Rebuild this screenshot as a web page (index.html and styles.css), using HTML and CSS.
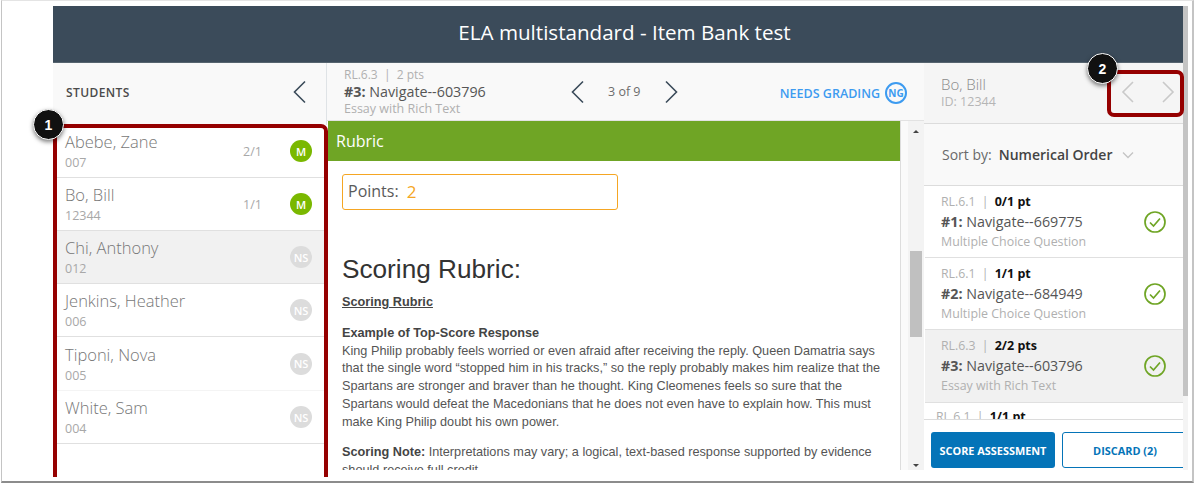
FILE: index.html
```html
<!DOCTYPE html>
<html lang="en">
<head>
    <meta charset="UTF-8">
    <meta name="viewport" content="width=device-width, initial-scale=1.0">
    <title>ELA multistandard - Item Bank test</title>
    <link rel="stylesheet" href="styles.css">
</head>
<body>
    <div class="window">
        <div class="app">
            <header class="title-bar">ELA multistandard - Item Bank test</header>
            <div class="columns">
                <aside class="students">
                    <div class="students-head">
                        <span class="students-title">STUDENTS</span>
                        <svg class="chevron" width="16" height="24" viewBox="0 0 16 24"><path d="M13 1.500 2.500 12 13 22.500"/></svg>
                    </div>
                    <div class="student">
                        <div class="student-text"><div class="student-name">Abebe, Zane</div><div class="student-id">007</div></div>
                        <span class="student-score">2/1</span>
                        <span class="badge badge-m">M</span>
                    </div>
                    <div class="student">
                        <div class="student-text"><div class="student-name">Bo, Bill</div><div class="student-id">12344</div></div>
                        <span class="student-score">1/1</span>
                        <span class="badge badge-m">M</span>
                    </div>
                    <div class="student selected">
                        <div class="student-text"><div class="student-name">Chi, Anthony</div><div class="student-id">012</div></div>
                        <span class="badge badge-ns">NS</span>
                    </div>
                    <div class="student">
                        <div class="student-text"><div class="student-name">Jenkins, Heather</div><div class="student-id">006</div></div>
                        <span class="badge badge-ns">NS</span>
                    </div>
                    <div class="student student-soft">
                        <div class="student-text"><div class="student-name">Tiponi, Nova</div><div class="student-id">005</div></div>
                        <span class="badge badge-ns">NS</span>
                    </div>
                    <div class="student">
                        <div class="student-text"><div class="student-name">White, Sam</div><div class="student-id">004</div></div>
                        <span class="badge badge-ns">NS</span>
                    </div>
                </aside>

                <main class="center">
                    <div class="item-head">
                        <div class="item-info">
                            <div class="item-meta">RL.6.3 &nbsp;|&nbsp; 2 pts</div>
                            <div class="item-name"><b>#3:</b> Navigate--603796</div>
                            <div class="item-type">Essay with Rich Text</div>
                        </div>
                        <div class="item-pager">
                            <svg class="chevron" width="16" height="24" viewBox="0 0 16 24"><path d="M13 1.500 2.500 12 13 22.500"/></svg>
                            <span class="pager-count">3 of 9</span>
                            <svg class="chevron" width="16" height="24" viewBox="0 0 16 24"><path d="M3 1.500 13.500 12 3 22.500"/></svg>
                        </div>
                        <div class="item-status">NEEDS GRADING <span class="badge-ng">NG</span></div>
                    </div>
                    <div class="center-body">
                        <div class="rubric">
                            <div class="rubric-bar">Rubric</div>
                            <div class="rubric-content">
                                <div class="points">Points: <span class="points-value">2</span></div>
                                <h2>Scoring Rubric:</h2>
                                <p class="rubric-sub">Scoring Rubric</p>
                                <p><b>Example of Top-Score Response</b><br>
                                King Philip probably feels worried or even afraid after receiving the reply. Queen Damatria says<br>
                                that the single word “stopped him in his tracks,” so the reply probably makes him realize that the<br>
                                Spartans are stronger and braver than he thought. King Cleomenes feels so sure that the<br>
                                Spartans would defeat the Macedonians that he does not even have to explain how. This must<br>
                                make King Philip doubt his own power.</p>
                                <p><b>Scoring Note:</b> Interpretations may vary; a logical, text-based response supported by evidence<br>
                                should receive full credit.</p>
                            </div>
                        </div>
                        <div class="scrollbar">
                            <span class="arrow-up"></span>
                            <span class="scroll-thumb"></span>
                            <span class="arrow-down"></span>
                        </div>
                    </div>
                </main>

                <aside class="questions">
                    <div class="questions-head">
                        <div>
                            <div class="current-name">Bo, Bill</div>
                            <div class="current-id">ID: 12344</div>
                        </div>
                        <div class="current-nav">
                            <svg class="chevron faded" width="14" height="22" viewBox="0 0 14 22"><path d="M12 1 2 11l10 10"/></svg>
                            <svg class="chevron faded" width="14" height="22" viewBox="0 0 14 22"><path d="M2 1l10 10L2 21"/></svg>
                        </div>
                    </div>
                    <div class="sort">
                        <span class="sort-label">Sort by:</span>
                        <span class="sort-value">Numerical Order</span>
                        <svg class="caret" width="12" height="8" viewBox="0 0 12 8"><path d="M1 1.500l5 5 5-5"/></svg>
                    </div>
                    <div class="question">
                        <div class="question-text">
                            <div class="question-meta">RL.6.1 <i>|</i> <b>0/1 pt</b></div>
                            <div class="question-name"><b>#1:</b> Navigate--669775</div>
                            <div class="question-type">Multiple Choice Question</div>
                        </div>
                        <svg class="check" width="22" height="22" viewBox="0 0 22 22"><circle cx="11" cy="11" r="10"/><path d="M6 11.500l3.500 3.500 6.500-7.500"/></svg>
                    </div>
                    <div class="question">
                        <div class="question-text">
                            <div class="question-meta">RL.6.1 <i>|</i> <b>1/1 pt</b></div>
                            <div class="question-name"><b>#2:</b> Navigate--684949</div>
                            <div class="question-type">Multiple Choice Question</div>
                        </div>
                        <svg class="check" width="22" height="22" viewBox="0 0 22 22"><circle cx="11" cy="11" r="10"/><path d="M6 11.500l3.500 3.500 6.500-7.500"/></svg>
                    </div>
                    <div class="question selected">
                        <div class="question-text">
                            <div class="question-meta">RL.6.3 <i>|</i> <b>2/2 pts</b></div>
                            <div class="question-name"><b>#3:</b> Navigate--603796</div>
                            <div class="question-type">Essay with Rich Text</div>
                        </div>
                        <svg class="check" width="22" height="22" viewBox="0 0 22 22"><circle cx="11" cy="11" r="10"/><path d="M6 11.500l3.500 3.500 6.500-7.500"/></svg>
                    </div>
                    <div class="question-peek">
                        <div class="question-meta">RL.6.1 <i>|</i> <b>1/1 pt</b></div>
                    </div>
                    <div class="actions">
                        <button class="btn-score" type="button">SCORE ASSESSMENT</button>
                        <button class="btn-discard" type="button">DISCARD (2)</button>
                    </div>
                </aside>
            </div>
        </div>

        <!-- barra de rolagem da janela -->
        <div class="page-scroll"><span class="page-thumb"></span></div>

        <!-- anotacoes por cima da tela -->
        <div class="callout-box callout-box-1"></div>
        <div class="callout-box callout-box-2"></div>
        <span class="callout callout-1">1</span>
        <span class="callout callout-2">2</span>
    </div>
</body>
</html>
```

FILE: styles.css
```css
* {
    box-sizing: border-box;
}

body {
    margin: 0;
    background-color: #fff;
    font-family: "Open Sans", sans-serif;
    overflow: hidden;
}

.window {
    position: relative;
    width: 1193px;
    height: 483px;
    margin-left: 1px;
    padding: 5px 9px 0 51px;
    border-top: 1px solid #e4e4e4;
    border-left: 1px solid #c4c4c4;
    border-right: 2px solid #c4c4c4;
    border-bottom: 2px solid #8c8c8c;
    background-color: #fff;
}

.app {
    height: 464px;
    overflow: hidden;
}

.title-bar {
    height: 57px;
    padding-left: 13px;
    background-color: #3b4b5a;
    border-bottom: 1px solid #56646f;
    color: #fff;
    font-size: 20.600px;
    line-height: 53px;
    text-align: center;
}

.columns {
    display: flex;
    height: 407px;
}

.chevron path {
    fill: none;
    stroke: #3b4b5a;
    stroke-width: 1.600;
}

.chevron.faded path {
    stroke: #c9c9c9;
}

/* coluna dos alunos */
.students {
    width: 274px;
    flex: none;
    background-color: #fff;
}

.students-head {
    display: flex;
    justify-content: space-between;
    align-items: center;
    height: 62px;
    padding: 0 18px 4px 13px;
    background-color: #f9f9f9;
    border-right: 1px solid #dfe3e6;
}

.students-title {
    color: #4b4b4b;
    font-size: 12px;
    font-weight: 600;
    letter-spacing: 0.4px;
}

.student {
    display: flex;
    align-items: center;
    height: 53px;
    padding: 0 15px 0 12px;
    border-bottom: 1px solid #e0e0e0;
}

.student.selected {
    background-color: #f1f1f1;
}

.student-soft {
    height: 54px;
    border-bottom-color: #f4f4f4;
}

.student-text {
    flex: 1;
}

.student-name {
    color: #777;
    font-size: 16.500px;
    font-weight: 300;
    line-height: 22px;
}

.student-id {
    margin-top: 1px;
    color: #a8a8a8;
    font-size: 12.500px;
    line-height: 17px;
}

.student-score {
    color: #a8a8a8;
    font-size: 12.500px;
    margin-right: 28px;
}

.badge {
    display: flex;
    justify-content: center;
    align-items: center;
    width: 22px;
    height: 22px;
    border-radius: 50%;
    color: #fff;
    font-size: 11px;
    font-weight: 600;
}

.badge-m {
    background-color: #7ab800;
}

.badge-ns {
    background-color: #dcdcdc;
}

/* coluna central */
.center {
    width: 597px;
    flex: none;
    min-width: 0;
}

.item-head {
    display: flex;
    align-items: center;
    height: 58px;
    padding: 0 17px 0 17px;
    background-color: #f9f9f9;
    border-bottom: 1px solid #e2e2e2;
}

.item-info {
    width: 226px;
    flex: none;
}

.item-meta {
    color: #b0b0b0;
    font-size: 12px;
    line-height: 16px;
}

.item-name {
    color: #555;
    font-size: 14.300px;
    line-height: 18px;
}

.item-type {
    color: #b0b0b0;
    font-size: 12.500px;
    line-height: 16px;
}

.item-pager {
    display: flex;
    align-items: center;
    gap: 22px;
    flex: none;
}

.pager-count {
    color: #6c6c6c;
    font-size: 12.500px;
}

.item-status {
    display: flex;
    align-items: center;
    gap: 5px;
    margin-left: auto;
    padding-top: 3px;
    color: #3d9bf0;
    font-size: 12.500px;
    font-weight: 600;
}

.badge-ng {
    display: flex;
    justify-content: center;
    align-items: center;
    width: 22px;
    height: 22px;
    border: 2px solid #3d9bf0;
    border-radius: 50%;
    font-size: 10px;
    font-weight: 700;
}

.center-body {
    display: flex;
    height: 349px;
}

.rubric {
    width: 573px;
    margin-left: 1px;
    flex: none;
    overflow: hidden;
    border-right: 1px solid #ddd;
    background-color: #fff;
}

.rubric-bar {
    height: 40px;
    padding-left: 8px;
    background-color: #6fa525;
    color: #fff;
    font-size: 16px;
    line-height: 40px;
}

.rubric-content {
    padding: 13px 0 0 14px;
    color: #555;
    font-family: "Liberation Sans", Arial, sans-serif;
    font-size: 12.700px;
    line-height: 17.750px;
}

.rubric-content b {
    color: #444;
}

.points {
    display: flex;
    align-items: center;
    gap: 8px;
    width: 276px;
    height: 36px;
    padding-left: 5px;
    border: 1px solid #f5a623;
    border-radius: 3px;
    color: #5a5a5a;
    font-family: "Open Sans", sans-serif;
    font-size: 16px;
}

.points-value {
    color: #f5a623;
    font-size: 17px;
}

.rubric-content h2 {
    margin: 44px 0 10px;
    color: #333;
    font-size: 26.200px;
    font-weight: 400;
    line-height: 30px;
}

.rubric-content p {
    margin: 0 0 13px;
}

.rubric-content .rubric-sub {
    color: #444;
    font-weight: 700;
    text-decoration: underline;
}

.scrollbar {
    position: relative;
    flex: 1;
    background-color: #fafafa;
    padding-left: 7px;
}

.scrollbar::before {
    content: "";
    display: block;
    height: 100%;
    background-color: #f3f3f3;
}

.scroll-thumb {
    position: absolute;
    top: 130px;
    left: 9px;
    width: 12px;
    height: 86px;
    background-color: #c0c0c0;
}

.arrow-up,
.arrow-down {
    position: absolute;
    left: 12px;
    width: 0;
    height: 0;
    border-left: 3px solid transparent;
    border-right: 3px solid transparent;
}

.arrow-up {
    top: 9px;
    border-bottom: 3px solid #444;
}

.arrow-down {
    bottom: 3px;
    border-top: 3px solid #444;
}

/* coluna das questoes */
.questions {
    display: flex;
    flex-direction: column;
    flex: 1;
    min-width: 0;
    overflow: hidden;
    background-color: #fff;
}

.questions-head {
    display: flex;
    justify-content: space-between;
    align-items: center;
    height: 61px;
    flex: none;
    padding: 0 8px 2px 17px;
    background-color: #f5f5f5;
    border-bottom: 1px solid #dcdcdc;
}

.current-name {
    color: #8a8a8a;
    font-size: 15px;
    font-weight: 300;
    line-height: 19px;
}

.current-id {
    color: #b5b5b5;
    font-size: 12.500px;
    line-height: 15px;
}

.current-nav {
    display: flex;
    gap: 26px;
}

.sort {
    display: flex;
    align-items: center;
    height: 62px;
    flex: none;
    padding-left: 18px;
    background-color: #f9f9f9;
    border-bottom: 1px solid #dcdcdc;
    font-size: 14px;
}

.sort-label {
    color: #6a6a6a;
    margin-right: 7px;
}

.sort-value {
    color: #444;
    font-weight: 600;
    margin-right: 10px;
}

.caret path {
    fill: none;
    stroke: #c4c4c4;
    stroke-width: 1.300;
}

.question {
    display: flex;
    align-items: center;
    height: 72px;
    flex: none;
    padding: 0 17px 0 16px;
    margin-left: 1px;
    border-bottom: 1px solid #e0e0e0;
}

.question.selected {
    height: 73px;
    padding-bottom: 1px;
    background-color: #f1f1f1;
}

.question-text {
    flex: 1;
}

.question-meta {
    color: #b0b0b0;
    font-size: 12.300px;
    line-height: 20px;
}

.question-meta i {
    font-style: normal;
    margin: 0 3px;
}

.question-meta b {
    color: #111;
    font-size: 12.500px;
    font-weight: 700;
}

.question-name {
    color: #555;
    font-size: 14.300px;
    line-height: 20px;
}

.question-type {
    color: #b0b0b0;
    font-size: 12.400px;
    line-height: 19px;
}

.check circle,
.check path {
    fill: none;
    stroke: #6fa525;
    stroke-width: 1.700;
}

.question-peek {
    height: 16px;
    flex: none;
    padding: 4px 0 0 12px;
    overflow: hidden;
    background-color: #fff;
}

.actions {
    display: flex;
    gap: 7px;
    flex: none;
    height: 52px;
    padding: 12px 0 0 7px;
    border-top: 1px solid #dcdcdc;
    background-color: #fff;
}

.actions button {
    height: 36px;
    border-radius: 3px;
    font-family: "Open Sans", sans-serif;
    font-size: 10.900px;
    font-weight: 700;
    cursor: pointer;
}

.btn-score {
    width: 124px;
    flex: none;
    padding: 0;
    background-color: #0474b8;
    border: none;
    color: #fff;
}

.btn-discard {
    width: 126px;
    flex: none;
    padding: 0;
    background-color: #fff;
    border: 1px solid #0474b8;
    color: #0474b8;
}

/* barra de rolagem da janela */
.page-scroll {
    position: absolute;
    top: 5px;
    left: 1181px;
    width: 5px;
    height: 464px;
    background-color: #f4f4f4;
}

.page-thumb {
    display: block;
    height: 390px;
    background-color: #c4c4c4;
}

/* anotacoes */
.callout-box {
    position: absolute;
    border: 4px solid #950000;
    border-radius: 7px;
}

.callout-box-1 {
    top: 123px;
    left: 51px;
    width: 275px;
    height: 353px;
    border-bottom: none;
    border-radius: 7px 7px 0 0;
}

.callout-box-2 {
    top: 69px;
    left: 1105px;
    width: 77px;
    height: 47px;
}

.callout {
    position: absolute;
    display: flex;
    justify-content: center;
    align-items: center;
    width: 31px;
    height: 31px;
    border-radius: 50%;
    background-color: #111;
    box-shadow: 0 2px 4px rgba(0, 0, 0, 0.5);
    border: 1px solid #fff;
    color: #fff;
    font-family: "Liberation Sans", Arial, sans-serif;
    font-size: 14px;
    font-weight: 700;
}

.callout-1 {
    top: 108px;
    left: 31px;
}

.callout-2 {
    top: 52px;
    left: 1085px;
}
```
